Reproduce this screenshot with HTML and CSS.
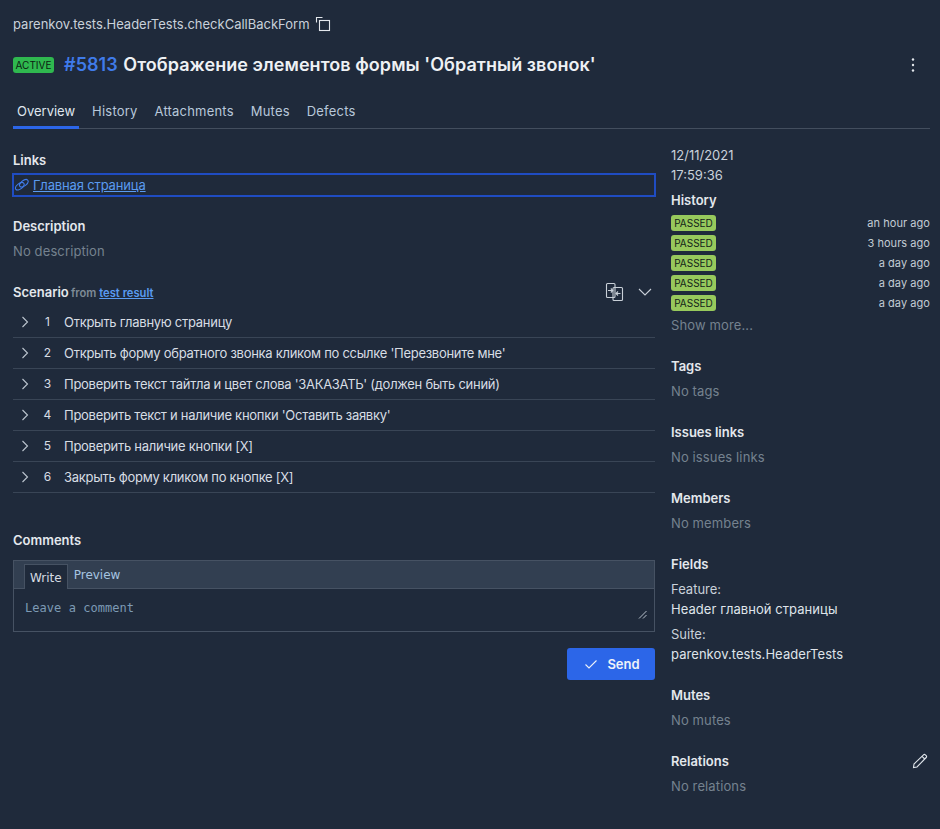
FILE: index.html
```html
<!DOCTYPE html>
<html lang="en">
<head>
<meta charset="utf-8">
<title>Test case</title>
<link rel="stylesheet" href="styles.css">
</head>
<body>
<div class="page">
  <div class="crumb"><span>parenkov.tests.HeaderTests.checkCallBackForm</span>
    <svg class="ico-copy" width="16" height="16" viewBox="0 0 16 16" fill="none" stroke="currentColor" stroke-width="1.1"><rect x="4.500" y="4.500" width="10" height="10"/><path d="M1.500 6.500V1.500H7.500"/></svg>
  </div>
  <header class="head">
    <span class="badge-active">ACTIVE</span>
    <h1 class="title"><span class="num">#5813</span> Отображение элементов формы 'Обратный звонок'</h1>
    <svg class="ico-more" width="16" height="16" viewBox="0 0 16 16" fill="currentColor"><circle cx="8" cy="2.500" r="1.200"/><circle cx="8" cy="8" r="1.200"/><circle cx="8" cy="13.500" r="1.200"/></svg>
  </header>
  <nav class="tabs">
    <a class="tab active">Overview</a><a class="tab">History</a><a class="tab">Attachments</a><a class="tab">Mutes</a><a class="tab">Defects</a>
  </nav>
  <div class="cols">
    <main class="main">
      <section class="links-sec">
        <h2 class="label">Links</h2>
        <div class="link-box">
          <svg class="ico-link" width="16" height="16" viewBox="0 0 16 16" fill="none" stroke="currentColor" stroke-width="1.100"><ellipse cx="5.800" cy="9.300" rx="5" ry="2.700" transform="rotate(-38 5.800 9.300)"/><ellipse cx="9.800" cy="6.300" rx="5" ry="2.700" transform="rotate(-38 9.800 6.300)"/></svg>
          <a class="link link-main">Главная страница</a>
        </div>
      </section>
      <section class="desc">
        <h2 class="label">Description</h2>
        <p class="muted">No description</p>
      </section>
      <section class="scenario">
        <div class="scen-head">
          <h2 class="label">Scenario <small class="from">from <a class="link">test result</a></small></h2>
          <div class="scen-tools">
            <svg width="20" height="20" viewBox="0 0 20 20" fill="none" stroke="currentColor" stroke-width="1.100"><rect x="2.500" y="1.500" width="8.500" height="14" rx="1"/><rect x="9" y="5.500" width="9.500" height="13" rx="1"/><path d="M4 8.500h4.500M6.800 6.500l2 2-2 2M16.500 11.500h-4.500M14 9.500l-2 2 2 2"/></svg>
            <svg width="16" height="16" viewBox="0 0 16 16" fill="none" stroke="currentColor" stroke-width="1.100"><path d="M2 5l6 6 6-6"/></svg>
          </div>
        </div>
        <ol class="steps">
          <li class="step"><svg class="chev" width="16" height="16" viewBox="0 0 16 16" fill="none" stroke="currentColor" stroke-width="1.100"><path d="M5.500 3l5 5-5 5"/></svg><span class="n">1</span><span class="cyr">Открыть главную страницу</span></li>
          <li class="step"><svg class="chev" width="16" height="16" viewBox="0 0 16 16" fill="none" stroke="currentColor" stroke-width="1.100"><path d="M5.500 3l5 5-5 5"/></svg><span class="n">2</span><span class="cyr">Открыть форму обратного звонка кликом по ссылке 'Перезвоните мне'</span></li>
          <li class="step"><svg class="chev" width="16" height="16" viewBox="0 0 16 16" fill="none" stroke="currentColor" stroke-width="1.100"><path d="M5.500 3l5 5-5 5"/></svg><span class="n">3</span><span class="cyr">Проверить текст тайтла и цвет слова 'ЗАКАЗАТЬ' (должен быть синий)</span></li>
          <li class="step"><svg class="chev" width="16" height="16" viewBox="0 0 16 16" fill="none" stroke="currentColor" stroke-width="1.100"><path d="M5.500 3l5 5-5 5"/></svg><span class="n">4</span><span class="cyr">Проверить текст и наличие кнопки 'Оставить заявку'</span></li>
          <li class="step"><svg class="chev" width="16" height="16" viewBox="0 0 16 16" fill="none" stroke="currentColor" stroke-width="1.100"><path d="M5.500 3l5 5-5 5"/></svg><span class="n">5</span><span class="cyr">Проверить наличие кнопки [X]</span></li>
          <li class="step"><svg class="chev" width="16" height="16" viewBox="0 0 16 16" fill="none" stroke="currentColor" stroke-width="1.100"><path d="M5.500 3l5 5-5 5"/></svg><span class="n">6</span><span class="cyr">Закрыть форму кликом по кнопке [X]</span></li>
        </ol>
      </section>
      <section class="comments">
        <h2 class="label">Comments</h2>
        <div class="editor">
          <div class="ed-tabs"><span class="ed-tab on">Write</span><span class="ed-tab">Preview</span></div>
          <div class="ed-body">
            <span class="ph">Leave a comment</span>
            <svg class="grip" width="10" height="10" viewBox="0 0 10 10" fill="none" stroke="#b8c2cc" stroke-width="1"><path d="M1 8.500 8.500 1M5 8.500 8.500 5"/></svg>
          </div>
        </div>
        <div class="send-row">
          <button class="send"><svg width="14" height="14" viewBox="0 0 14 14" fill="none" stroke="currentColor" stroke-width="1.100"><path d="M1.500 7.500 5 11 12.500 3.500"/></svg>Send</button>
        </div>
      </section>
    </main>
    <aside class="side">
      <div class="date">12/11/2021<br>17:59:36</div>
      <h2 class="label hist-label">History</h2>
      <ul class="hist">
        <li class="hrow"><span class="passed">PASSED</span><span class="ago">an hour ago</span></li>
        <li class="hrow"><span class="passed">PASSED</span><span class="ago">3 hours ago</span></li>
        <li class="hrow"><span class="passed">PASSED</span><span class="ago">a day ago</span></li>
        <li class="hrow"><span class="passed">PASSED</span><span class="ago">a day ago</span></li>
        <li class="hrow"><span class="passed">PASSED</span><span class="ago">a day ago</span></li>
      </ul>
      <p class="muted more">Show more...</p>
      <section class="sblock"><h2 class="label">Tags</h2><p class="muted">No tags</p></section>
      <section class="sblock"><h2 class="label">Issues links</h2><p class="muted">No issues links</p></section>
      <section class="sblock"><h2 class="label">Members</h2><p class="muted">No members</p></section>
      <section class="sblock">
        <h2 class="label">Fields</h2>
        <dl class="fields">
          <dt>Feature:</dt><dd>Header главной страницы</dd>
          <dt>Suite:</dt><dd>parenkov.tests.HeaderTests</dd>
        </dl>
      </section>
      <section class="sblock"><h2 class="label">Mutes</h2><p class="muted">No mutes</p></section>
      <section class="sblock">
        <div class="rel-head"><h2 class="label">Relations</h2>
          <svg width="16" height="16" viewBox="0 0 16 16" fill="none" stroke="currentColor" stroke-width="1.100"><path d="M1.500 14.500 2 11 11.500 1.800a1.300 1.300 0 0 1 1.800 0l.9.900a1.300 1.300 0 0 1 0 1.800L5 14z"/><path d="M10 3.300 12.800 6"/></svg>
        </div>
        <p class="muted">No relations</p>
      </section>
    </aside>
  </div>
</div>
</body>
</html>
```
FILE: styles.css
```css
* { box-sizing: border-box; }
html, body { margin: 0; padding: 0; }
body {
  background: #1f2a3b;
  color: #dfe4ea;
  font: 13px/20px Inter, "Noto Sans", sans-serif;
  height: 829px;
  overflow: hidden;
}
h1, h2, p, ul, ol, dl, dd { margin: 0; padding: 0; }
ul, ol { list-style: none; }
.page { padding: 14px 10px 0 13px; }
.cyr { letter-spacing: -0.28px; }
.crumb { display: flex; align-items: center; gap: 5px; height: 20px; color: #c9d1da; }
.ico-copy { color: #e3e7ec; flex: none; }
.head { display: flex; align-items: center; margin-top: 17px; height: 28px; }
.badge-active {
  background: #2fb84f; color: #0c1c12; font-size: 10px; line-height: 16px; height: 16px;
  border-radius: 3px; width: 41px; text-align: center; flex: none;
}
.title { font-size: 18px; line-height: 28px; font-weight: 600; color: #eef1f4; margin-left: 10px; flex: 1; white-space: nowrap; letter-spacing: .05px; }
.num { color: #3f7bea; margin-right: 1px; }
.ico-more { color: #e3e7ec; flex: none; margin-right: 9px; }
.tabs { display: flex; margin-top: 18px; height: 32px; border-bottom: 1px solid #434e5e; }
.tab { padding: 4px 0 0; height: 32px; margin-left: 17px; color: #b8c8da; letter-spacing: .2px; }
.tab.active { color: #dfe6ee; margin-left: 0; margin-right: -4px; padding: 4px 4px 0; border-bottom: 3px solid #2c66e8; letter-spacing: 0; }
.cols { display: grid; grid-template-columns: 642px 259px; column-gap: 16px; }
.label { font-size: 13px; line-height: 20px; font-weight: 600; color: #e4e8ed; }
.muted { color: #75828f; line-height: 20px; letter-spacing: .12px; }
.main { padding-top: 21px; }
.link-box {
  display: flex; align-items: center; gap: 3px; height: 24px; margin-top: 3px;
  border: 2px solid #1f4cc2; margin-left: -1px; margin-right: -1px;
}
.ico-link { color: #3f7bea; flex: none; }
.link { color: #5a9bf0; text-decoration: underline; }
.link-main { letter-spacing: -0.15px; }
.desc { margin-top: 19px; }
.desc .muted { margin-top: 5px; }
.scenario { margin-top: 21px; }
.scen-head { display: flex; justify-content: space-between; align-items: center; height: 20px; }
.from { font-size: 11.200px; font-weight: 600; color: #7e8a96; margin-left: -1px; }
.scen-tools { display: flex; align-items: center; gap: 13px; color: #c9d0d8; margin-right: 2px; }
.steps { margin-top: 5px; }
.step { display: flex; align-items: center; height: 31px; border-bottom: 1px solid #394556; color: #d7dde4; }
.chev { color: #bcc5cf; margin-left: 4px; flex: none; }
.n { width: 23px; text-align: center; margin-left: 3px; margin-right: 5px; font-size: 12px; flex: none; }
.comments { margin-top: 37px; }
.editor { margin-top: 10px; border: 1px solid #465263; }
.ed-tabs { display: flex; height: 28px; background: #323f51; border-bottom: 1px solid #465263; padding: 3px 0 0 10px; }
.ed-tab { color: #a6c4e0; padding: 1px 0 0 6px; font: 12px/20px "DejaVu Sans", sans-serif; }
.ed-tab.on { background: #1f2a3b; color: #d5dbe2; border: 1px solid #465263; border-bottom: 0; height: 25px; padding: 3px 5px 0; }
.ed-body { position: relative; height: 42px; padding: 9px 11px; }
.ph { font: 12px/20px "DejaVu Sans Mono", monospace; letter-spacing: .05px; color: #7d9ab5; display: block; }
.grip { position: absolute; right: 6px; bottom: 11px; }
.send-row { display: flex; justify-content: flex-end; margin-top: 16px; }
.send {
  display: flex; align-items: center; justify-content: center; gap: 9px; width: 88px; height: 32px; padding: 0 0 0 2px;
  background: #2c66e8; color: #eef2f8; border: 0; border-radius: 3px; font: 600 13px/20px Inter, sans-serif;
}
.side { padding-top: 16px; }
.date { line-height: 20px; color: #c9d1da; }
.hist-label { margin-top: 5px; }
.hist { margin-top: 3px; }
.hrow { display: flex; justify-content: space-between; align-items: center; height: 20px; }
.passed {
  background: #97c95c; color: #12231a; font-size: 10px; line-height: 16px; height: 16px; width: 45px;
  text-align: center; border-radius: 3px;
}
.ago { font-size: 11px; letter-spacing: .05px; color: #c3ccd5; }
.more { margin-top: 2px; }
.sblock { margin-top: 21px; }
.sblock > .muted { margin-top: 5px; }
.fields { margin-top: 5px; }
.fields dt { color: #c9d1da; }
.fields dd { color: #dfe4ea; margin-bottom: 5px; letter-spacing: .06px; }
.rel-head { display: flex; justify-content: space-between; align-items: center; height: 20px; color: #dfe4ea; }
.rel-head svg { margin-right: 2px; }
```
